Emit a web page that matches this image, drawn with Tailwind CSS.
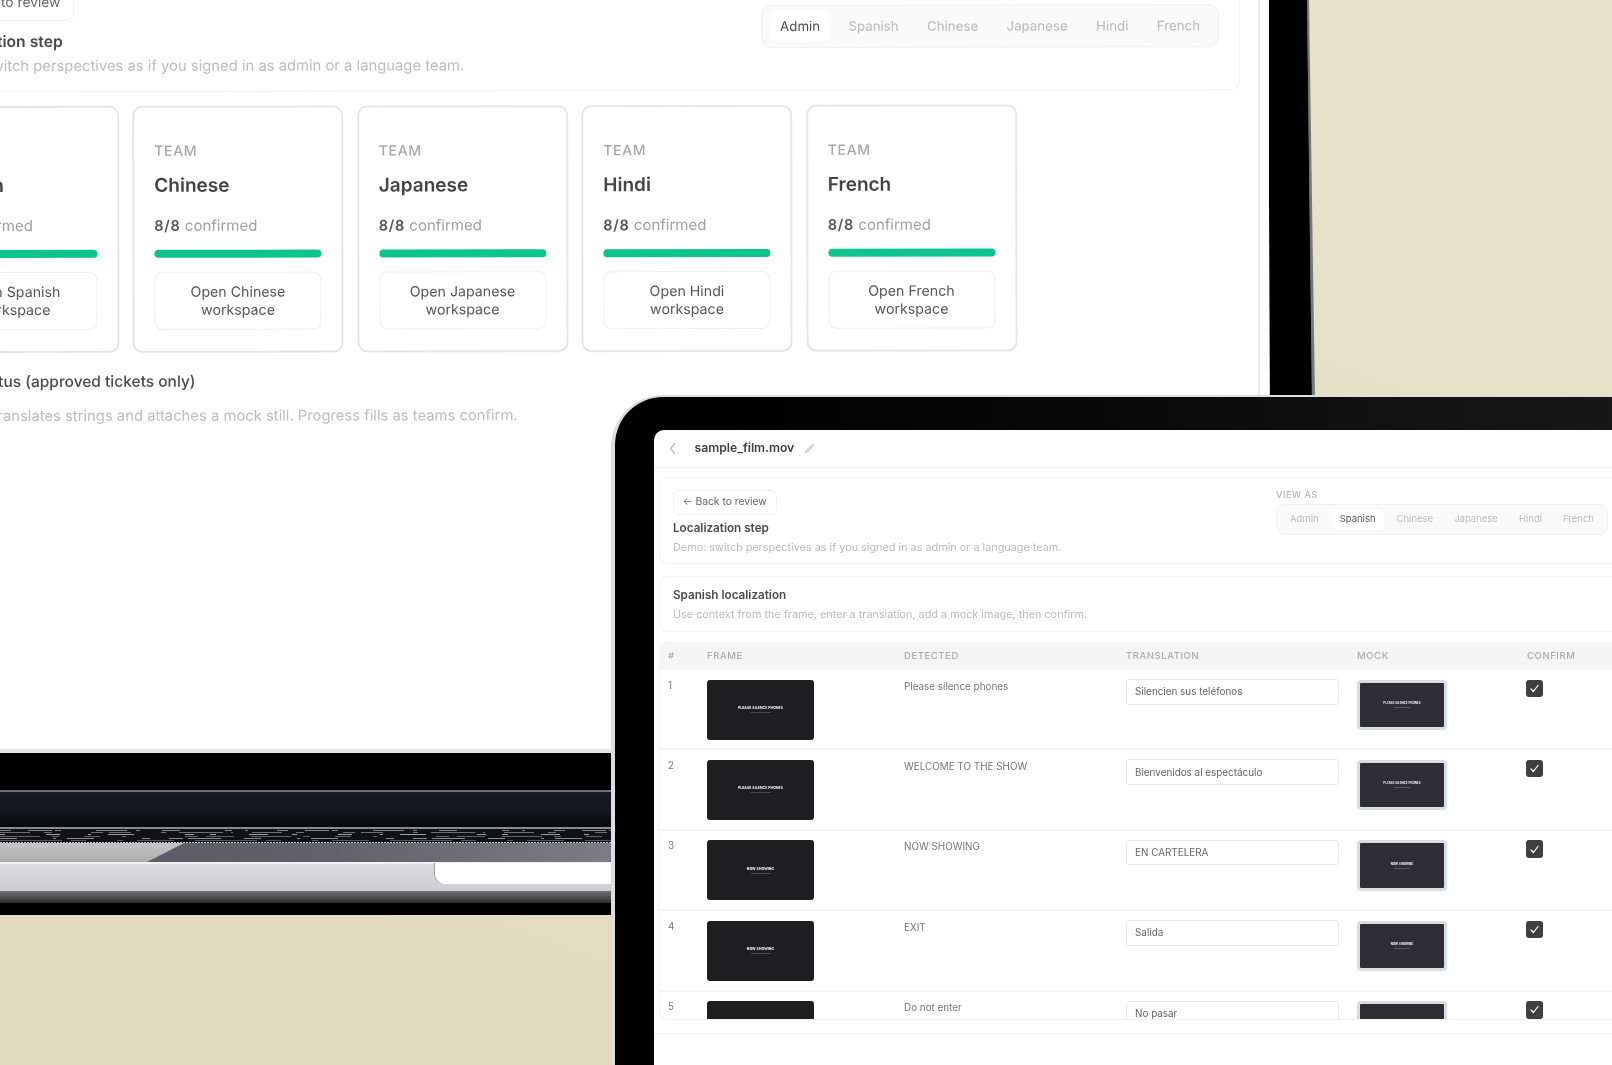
<!DOCTYPE html>
<html lang="en">
<head>
<meta charset="utf-8">
<title>Localization step</title>
<script src="https://cdn.jsdelivr.net/npm/@tailwindcss/browser@4"></script>
</head>
<body class="m-0 overflow-hidden bg-[#e5dec4]">
<div class="relative w-[1612px] h-[1065px] overflow-hidden bg-[linear-gradient(200deg,#e9e3cd_0%,#e5dec4_55%,#e3dbbf_100%)] font-['Inter','Liberation_Sans',sans-serif] blur-[0.6px]">

  <!-- Laptop right bezel -->
  <svg class="absolute left-[1260px] top-0" width="60" height="400" viewBox="0 0 60 400">
    <polygon points="47,0 49,0 55,400 52,400" fill="#77777a"/>
    <polygon points="8,0 47,0 52,400 10,400" fill="#000"/>
  </svg>

  <!-- Laptop screen -->
  <div class="absolute left-0 top-0 w-[1269px] h-[753px] overflow-hidden bg-white border-b-[4px] border-[#e6e6e6]">
    <div class="absolute left-[1258px] top-0 h-full w-[2px] bg-[#ececec]"></div>
    <div class="origin-top-left rotate-[-0.08deg] text-[#444]">
      <!-- Top panel -->
      <div class="ml-[-86px] mt-[-31px] w-[1326px] h-[122.5px] flex justify-between rounded-[10px] border border-[#f2f2f2] pl-[19px] pr-[20px] pt-[17px]">
        <div class="whitespace-nowrap">
          <div class="h-[34px] w-[140px] flex items-center justify-center pb-[3px] rounded-[8px] border border-[#efefef] text-[13.8px] text-[#666]">← Back to review</div>
          <div class="mt-[11px] h-[20px] leading-[20px] text-[15.7px] font-semibold text-[#4a4a4a]">Localization step</div>
          <div class="mt-[4px] h-[20px] leading-[20px] text-[14.8px] text-[#bdbdbd]">Demo: switch perspectives as if you signed in as admin or a language team.</div>
        </div>
        <div class="w-[458px]">
          <div class="h-[19px] text-[12px] font-medium tracking-[0.06em] text-[#b5b5b5]">VIEW AS</div>
          <div class="h-[43px] flex items-center justify-between rounded-[10px] border border-[#f1f1f1] bg-[#fafafa] px-[7px] text-[13.3px] text-[#b8b8b8]">
            <span class="h-[31px] flex items-center rounded-[8px] bg-white px-[11px] text-[#4a4a4a]">Admin</span>
            <span class="px-[11px]">Spanish</span>
            <span class="px-[11px]">Chinese</span>
            <span class="px-[11px]">Japanese</span>
            <span class="px-[11px]">Hindi</span>
            <span class="px-[11px]">French</span>
          </div>
        </div>
      </div>
      <!-- Cards -->
      <div class="mt-[14.5px] ml-[-92.5px] flex gap-[13.5px]">
        <div class="w-[211px] h-[247px] flex-none rounded-[10px] border-2 border-[#e6e6e6] px-[20px] pt-[33px]">
          <div class="h-[20px] leading-[20px] text-[14px] font-medium tracking-[0.05em] text-[#a8a8a8]">TEAM</div>
          <div class="mt-[11px] h-[28px] leading-[28px] text-[19px] font-semibold">Spanish</div>
          <div class="mt-[16px] h-[20px] leading-[20px] text-[15px] text-[#a0a0a0]"><span class="font-semibold text-[14.5px] text-[#555] tracking-[0.05em]">8/8</span> confirmed</div>
          <div class="mt-[14px] h-[7.5px] rounded-full bg-[#0dc391]"></div>
          <div class="mt-[14px] h-[58px] flex items-center justify-center rounded-[8px] border border-[#efefef] text-center text-[14.2px] leading-[18px] text-[#555]">Open Spanish<br>workspace</div>
        </div>
        <div class="w-[211px] h-[247px] flex-none rounded-[10px] border-2 border-[#e6e6e6] px-[20px] pt-[33px]">
          <div class="h-[20px] leading-[20px] text-[14px] font-medium tracking-[0.05em] text-[#a8a8a8]">TEAM</div>
          <div class="mt-[11px] h-[28px] leading-[28px] text-[19px] font-semibold">Chinese</div>
          <div class="mt-[16px] h-[20px] leading-[20px] text-[15px] text-[#a0a0a0]"><span class="font-semibold text-[14.5px] text-[#555] tracking-[0.05em]">8/8</span> confirmed</div>
          <div class="mt-[14px] h-[7.5px] rounded-full bg-[#0dc391]"></div>
          <div class="mt-[14px] h-[58px] flex items-center justify-center rounded-[8px] border border-[#efefef] text-center text-[14.2px] leading-[18px] text-[#555]">Open Chinese<br>workspace</div>
        </div>
        <div class="w-[211px] h-[247px] flex-none rounded-[10px] border-2 border-[#e6e6e6] px-[20px] pt-[33px]">
          <div class="h-[20px] leading-[20px] text-[14px] font-medium tracking-[0.05em] text-[#a8a8a8]">TEAM</div>
          <div class="mt-[11px] h-[28px] leading-[28px] text-[19px] font-semibold">Japanese</div>
          <div class="mt-[16px] h-[20px] leading-[20px] text-[15px] text-[#a0a0a0]"><span class="font-semibold text-[14.5px] text-[#555] tracking-[0.05em]">8/8</span> confirmed</div>
          <div class="mt-[14px] h-[7.5px] rounded-full bg-[#0dc391]"></div>
          <div class="mt-[14px] h-[58px] flex items-center justify-center rounded-[8px] border border-[#efefef] text-center text-[14.2px] leading-[18px] text-[#555]">Open Japanese<br>workspace</div>
        </div>
        <div class="w-[211px] h-[247px] flex-none rounded-[10px] border-2 border-[#e6e6e6] px-[20px] pt-[33px]">
          <div class="h-[20px] leading-[20px] text-[14px] font-medium tracking-[0.05em] text-[#a8a8a8]">TEAM</div>
          <div class="mt-[11px] h-[28px] leading-[28px] text-[19px] font-semibold">Hindi</div>
          <div class="mt-[16px] h-[20px] leading-[20px] text-[15px] text-[#a0a0a0]"><span class="font-semibold text-[14.5px] text-[#555] tracking-[0.05em]">8/8</span> confirmed</div>
          <div class="mt-[14px] h-[7.5px] rounded-full bg-[#0dc391]"></div>
          <div class="mt-[14px] h-[58px] flex items-center justify-center rounded-[8px] border border-[#efefef] text-center text-[14.2px] leading-[18px] text-[#555]">Open Hindi<br>workspace</div>
        </div>
        <div class="w-[211px] h-[247px] flex-none rounded-[10px] border-2 border-[#e6e6e6] px-[20px] pt-[33px]">
          <div class="h-[20px] leading-[20px] text-[14px] font-medium tracking-[0.05em] text-[#a8a8a8]">TEAM</div>
          <div class="mt-[11px] h-[28px] leading-[28px] text-[19px] font-semibold">French</div>
          <div class="mt-[16px] h-[20px] leading-[20px] text-[15px] text-[#a0a0a0]"><span class="font-semibold text-[14.5px] text-[#555] tracking-[0.05em]">8/8</span> confirmed</div>
          <div class="mt-[14px] h-[7.5px] rounded-full bg-[#0dc391]"></div>
          <div class="mt-[14px] h-[58px] flex items-center justify-center rounded-[8px] border border-[#efefef] text-center text-[14.2px] leading-[18px] text-[#555]">Open French<br>workspace</div>
        </div>
      </div>
      <!-- Status -->
      <div class="ml-[-400px] w-[595px] mt-[18px] h-[22px] leading-[22px] text-right whitespace-nowrap text-[15.5px] font-medium text-[#4a4a4a]">Localization status (approved tickets only)</div>
      <div class="ml-[-400px] w-[917px] mt-[13px] h-[20px] leading-[20px] text-right whitespace-nowrap text-[14.8px] text-[#bdbdbd]">Each team translates strings and attaches a mock still. Progress fills as teams confirm.</div>
    </div>
  </div>

  <!-- Laptop base -->
  <div class="absolute left-0 top-[753px] w-[611px] h-[162px] flex flex-col overflow-hidden">
    <div class="h-[36.5px] flex-none bg-black"></div>
    <div class="h-[2.5px] flex-none bg-[#6c7077]"></div>
    <div class="h-[35px] flex-none bg-[linear-gradient(180deg,#161b24_0%,#12161d_55%,#08090b_100%)]"></div>
    <div class="h-[2px] flex-none bg-[#8a8d90]"></div>
    <svg class="flex-none block bg-[#101215]" width="611" height="14" viewBox="0 0 611 14">
      <line x1="0" y1="1.5" x2="611" y2="1.5" stroke="#9a9c9f" stroke-width="0.8" stroke-dasharray="11 17 24 3 6 35 31 9 4 22 18 45 7 13 3 29"/>
      <line x1="0" y1="3.5" x2="611" y2="3.5" stroke="#6c6f72" stroke-width="1" stroke-dasharray="30 14 8 39 12 6 22 30 5 13 44 8 2 19"/>
      <line x1="0" y1="5.5" x2="611" y2="5.5" stroke="#c5c7c9" stroke-width="0.8" stroke-dasharray="5 41 14 28 3 17 26 51 9 16 6 33 19 24"/>
      <line x1="0" y1="7.5" x2="611" y2="7.5" stroke="#5f6266" stroke-width="1" stroke-dasharray="40 12 7 25 16 22 4 59 13 8 28 17"/>
      <line x1="0" y1="9.5" x2="611" y2="9.5" stroke="#a8aaad" stroke-width="0.8" stroke-dasharray="17 36 3 11 27 48 8 19 14 5 33 23"/>
      <line x1="0" y1="11.5" x2="611" y2="11.5" stroke="#55585c" stroke-width="1" stroke-dasharray="62 9 15 31 6 14 37 21"/>
      <line x1="0" y1="13.5" x2="611" y2="13.5" stroke="#c8c8c8" stroke-width="1" stroke-dasharray="2 1"/>
    </svg>
    <div class="relative h-[19px] flex-none bg-[linear-gradient(90deg,#5a5a62_0%,#60606a_50%,#7c7c84_100%)]">
      <div class="h-full w-[184px] bg-[linear-gradient(180deg,#c4c4c4,#aeaeae)] [clip-path:polygon(0_0,100%_0,147px_100%,0_100%)]"></div>
    </div>
    <div class="relative h-[29px] flex-none border-t-[2px] border-[#f2f2f2] bg-[linear-gradient(180deg,#dcdcdf,#cfcfd3)]">
      <div class="absolute left-[434px] top-[-1px] h-[21px] w-[180px] rounded-bl-[10px] border-l-[1px] border-[#999] bg-white"></div>
    </div>
    <div class="h-[12px] flex-none bg-[linear-gradient(180deg,#737373,#4a4a4a_60%,#2a2a2a)]"></div>
    <div class="flex-1 bg-black"></div>
  </div>

  <!-- Tablet -->
  <div class="absolute left-[611px] top-[395px] w-[1010px] h-[680px] rounded-tl-[52px] bg-[#dedede] pl-[4px] pt-[2px]">
    <div class="h-full rounded-tl-[48px] bg-[linear-gradient(90deg,#000_0%,#060606_40%,#181818_100%)] pl-[38.5px] pt-[32.5px]">
      <div class="h-full overflow-hidden rounded-tl-[10px] bg-white">
        <!-- Header -->
        <div class="h-[38.5px] flex items-center border-b border-[#f4f4f4] whitespace-nowrap">
          <svg class="ml-[15px]" width="7" height="11" viewBox="0 0 7 11" fill="none"><path d="M5.5 1 1.5 5.5 5.5 10" stroke="#b9b9b9" stroke-width="1.2" stroke-linecap="round" stroke-linejoin="round"/></svg>
          <span class="ml-[19px] text-[12.2px] font-semibold text-[#3f3f3f]">sample_film.mov</span>
          <svg class="ml-[9px]" width="13" height="13" viewBox="0 0 13 13" fill="none"><path d="M1.5 11.5 2.3 8.8 9.6 1.5 11.5 3.4 4.2 10.7Z" fill="#d2d2d2"/></svg>
        </div>
        <!-- Panel 1 -->
        <div class="ml-[5.5px] mt-[8.5px] w-[1000px] h-[87.5px] flex rounded-[8px] border border-[#f3f3f3] pl-[13px] pt-[12px]">
          <div class="w-[603px] flex-none whitespace-nowrap">
            <div class="h-[25px] w-[103.5px] flex items-center justify-center rounded-[6px] border border-[#f1f1f1] text-[10.3px] text-[#666]">← Back to review</div>
            <div class="mt-[5px] h-[16px] leading-[16px] text-[11.7px] font-semibold text-[#4a4a4a]">Localization step</div>
            <div class="mt-[4.5px] h-[14px] leading-[14px] text-[10.85px] text-[#bcbcbc]">Demo: switch perspectives as if you signed in as admin or a language team.</div>
          </div>
          <div class="w-[332px] flex-none">
            <div class="-mt-[1px] h-[12px] leading-[12px] text-[9px] font-medium tracking-[0.06em] text-[#b5b5b5]">VIEW AS</div>
            <div class="mt-[3.5px] h-[30.5px] flex items-center justify-between rounded-[8px] border border-[#f3f3f3] bg-[#fafafa] px-[5px] text-[9.5px] text-[#bcbcbc]">
              <span class="px-[8px]">Admin</span>
              <span class="h-[21px] flex items-center rounded-[6px] bg-white px-[8px] text-[#555]">Spanish</span>
              <span class="px-[8px]">Chinese</span>
              <span class="px-[8px]">Japanese</span>
              <span class="px-[8px]">Hindi</span>
              <span class="px-[8px]">French</span>
            </div>
          </div>
        </div>
        <!-- Panel 2 -->
        <div class="ml-[5.5px] mt-[12px] w-[1000px] h-[55.5px] rounded-[8px] border border-[#f3f3f3] pl-[13px] pt-[10px] whitespace-nowrap">
          <div class="h-[16px] leading-[16px] text-[11.7px] font-semibold text-[#4a4a4a]">Spanish localization</div>
          <div class="mt-[4px] h-[14px] leading-[14px] text-[10.85px] text-[#bcbcbc]">Use context from the frame, enter a translation, add a mock image, then confirm.</div>
        </div>
        <!-- Table -->
        <div class="ml-[5.5px] mt-[10px] w-[1000px] h-[378.5px] overflow-hidden rounded-[8px] border-b border-l border-[#f3f3f3]">
          <div class="h-[28.5px] grid grid-cols-[39px_197px_222px_231px_170px_1fr] items-center bg-[#f5f5f5] pl-[8px] text-[9.5px] font-medium tracking-[0.06em] text-[#ababab]">
            <span>#</span><span>FRAME</span><span>DETECTED</span><span>TRANSLATION</span><span>MOCK</span><span>CONFIRM</span>
          </div>
          <!-- Row 1 -->
          <div class="h-[80.4px] grid grid-cols-[39px_197px_222px_231px_170px_1fr] items-start border-b-2 border-[#f6f6f6] pl-[8px] pt-[9.5px] text-[9.9px] text-[#777]">
            <span class="-mt-[1px] leading-[12px]">1</span>
            <div class="h-[60px] w-[107px] flex flex-col items-center justify-center gap-[2px] rounded-[3px] bg-[#1e1e21]"><span class="text-[3.4px] font-bold tracking-[0.03em] leading-[4px] text-white">PLEASE SILENCE PHONES</span><span class="h-[1px] w-[20px] bg-white/20"></span></div>
            <span class="-mt-[1px] leading-[14px]">Please silence phones</span>
            <div class="-mt-[0.5px] h-[25.5px] w-[213px] flex items-center rounded-[3px] border border-[#e9e9e9] pl-[8px] text-[#666]">Silencien sus teléfonos</div>
            <div class="h-[50.5px] w-[90px] flex flex-col items-center justify-center gap-[2px] rounded-[4px] border-[3.5px] border-[#d6dde3] bg-[#2d2d33]"><span class="text-[2.8px] font-bold tracking-[0.03em] leading-[3px] text-white">PLEASE SILENCE PHONES</span><span class="h-[1px] w-[16px] bg-white/20"></span></div>
            <span class="-ml-[1.5px] h-[17.5px] w-[17.5px] flex items-center justify-center rounded-[3px] bg-[#404040]"><svg width="11" height="11" viewBox="0 0 11 11" fill="none"><path d="M2 6 4.4 8.5 9 2.5" stroke="#fff" stroke-width="1.2" stroke-linecap="round" stroke-linejoin="round"/></svg></span>
          </div>
          <!-- Row 2 -->
          <div class="h-[80.4px] grid grid-cols-[39px_197px_222px_231px_170px_1fr] items-start border-b-2 border-[#f6f6f6] pl-[8px] pt-[9.5px] text-[9.9px] text-[#777]">
            <span class="-mt-[1px] leading-[12px]">2</span>
            <div class="h-[60px] w-[107px] flex flex-col items-center justify-center gap-[2px] rounded-[3px] bg-[#1e1e21]"><span class="text-[3.4px] font-bold tracking-[0.03em] leading-[4px] text-white">PLEASE SILENCE PHONES</span><span class="h-[1px] w-[20px] bg-white/20"></span></div>
            <span class="-mt-[1px] leading-[14px]">WELCOME TO THE SHOW</span>
            <div class="-mt-[0.5px] h-[25.5px] w-[213px] flex items-center rounded-[3px] border border-[#e9e9e9] pl-[8px] text-[#666]">Bienvenidos al espectáculo</div>
            <div class="h-[50.5px] w-[90px] flex flex-col items-center justify-center gap-[2px] rounded-[4px] border-[3.5px] border-[#d6dde3] bg-[#2d2d33]"><span class="text-[2.8px] font-bold tracking-[0.03em] leading-[3px] text-white">PLEASE SILENCE PHONES</span><span class="h-[1px] w-[16px] bg-white/20"></span></div>
            <span class="-ml-[1.5px] h-[17.5px] w-[17.5px] flex items-center justify-center rounded-[3px] bg-[#404040]"><svg width="11" height="11" viewBox="0 0 11 11" fill="none"><path d="M2 6 4.4 8.5 9 2.5" stroke="#fff" stroke-width="1.2" stroke-linecap="round" stroke-linejoin="round"/></svg></span>
          </div>
          <!-- Row 3 -->
          <div class="h-[80.4px] grid grid-cols-[39px_197px_222px_231px_170px_1fr] items-start border-b-2 border-[#f6f6f6] pl-[8px] pt-[9.5px] text-[9.9px] text-[#777]">
            <span class="-mt-[1px] leading-[12px]">3</span>
            <div class="h-[60px] w-[107px] flex flex-col items-center justify-center gap-[2px] rounded-[3px] bg-[#1e1e21]"><span class="text-[3.4px] font-bold tracking-[0.03em] leading-[4px] text-white">NOW SHOWING</span><span class="h-[1px] w-[20px] bg-white/20"></span></div>
            <span class="-mt-[1px] leading-[14px]">NOW SHOWING</span>
            <div class="-mt-[0.5px] h-[25.5px] w-[213px] flex items-center rounded-[3px] border border-[#e9e9e9] pl-[8px] text-[#666]">EN CARTELERA</div>
            <div class="h-[50.5px] w-[90px] flex flex-col items-center justify-center gap-[2px] rounded-[4px] border-[3.5px] border-[#d6dde3] bg-[#2d2d33]"><span class="text-[2.8px] font-bold tracking-[0.03em] leading-[3px] text-white">NOW SHOWING</span><span class="h-[1px] w-[16px] bg-white/20"></span></div>
            <span class="-ml-[1.5px] h-[17.5px] w-[17.5px] flex items-center justify-center rounded-[3px] bg-[#404040]"><svg width="11" height="11" viewBox="0 0 11 11" fill="none"><path d="M2 6 4.4 8.5 9 2.5" stroke="#fff" stroke-width="1.2" stroke-linecap="round" stroke-linejoin="round"/></svg></span>
          </div>
          <!-- Row 4 -->
          <div class="h-[80.4px] grid grid-cols-[39px_197px_222px_231px_170px_1fr] items-start border-b-2 border-[#f6f6f6] pl-[8px] pt-[9.5px] text-[9.9px] text-[#777]">
            <span class="-mt-[1px] leading-[12px]">4</span>
            <div class="h-[60px] w-[107px] flex flex-col items-center justify-center gap-[2px] rounded-[3px] bg-[#1e1e21]"><span class="text-[3.4px] font-bold tracking-[0.03em] leading-[4px] text-white">NOW SHOWING</span><span class="h-[1px] w-[20px] bg-white/20"></span></div>
            <span class="-mt-[1px] leading-[14px]">EXIT</span>
            <div class="-mt-[0.5px] h-[25.5px] w-[213px] flex items-center rounded-[3px] border border-[#e9e9e9] pl-[8px] text-[#666]">Salida</div>
            <div class="h-[50.5px] w-[90px] flex flex-col items-center justify-center gap-[2px] rounded-[4px] border-[3.5px] border-[#d6dde3] bg-[#2d2d33]"><span class="text-[2.8px] font-bold tracking-[0.03em] leading-[3px] text-white">NOW SHOWING</span><span class="h-[1px] w-[16px] bg-white/20"></span></div>
            <span class="-ml-[1.5px] h-[17.5px] w-[17.5px] flex items-center justify-center rounded-[3px] bg-[#404040]"><svg width="11" height="11" viewBox="0 0 11 11" fill="none"><path d="M2 6 4.4 8.5 9 2.5" stroke="#fff" stroke-width="1.2" stroke-linecap="round" stroke-linejoin="round"/></svg></span>
          </div>
          <!-- Row 5 -->
          <div class="h-[80.4px] grid grid-cols-[39px_197px_222px_231px_170px_1fr] items-start pl-[8px] pt-[9.5px] text-[9.9px] text-[#777]">
            <span class="-mt-[1px] leading-[12px]">5</span>
            <div class="h-[60px] w-[107px] rounded-[3px] bg-[#1e1e21]"></div>
            <span class="-mt-[1px] leading-[14px]">Do not enter</span>
            <div class="-mt-[0.5px] h-[25.5px] w-[213px] flex items-center rounded-[3px] border border-[#e9e9e9] pl-[8px] text-[#666]">No pasar</div>
            <div class="h-[50.5px] w-[90px] rounded-[4px] border-[3.5px] border-[#d6dde3] bg-[#2d2d33]"></div>
            <span class="-ml-[1.5px] h-[17.5px] w-[17.5px] flex items-center justify-center rounded-[3px] bg-[#404040]"><svg width="11" height="11" viewBox="0 0 11 11" fill="none"><path d="M2 6 4.4 8.5 9 2.5" stroke="#fff" stroke-width="1.2" stroke-linecap="round" stroke-linejoin="round"/></svg></span>
          </div>
        </div>
        <div class="mt-[13px] h-[1px] bg-[#f6f6f6]"></div>
      </div>
    </div>
  </div>
</div>
</body>
</html>
